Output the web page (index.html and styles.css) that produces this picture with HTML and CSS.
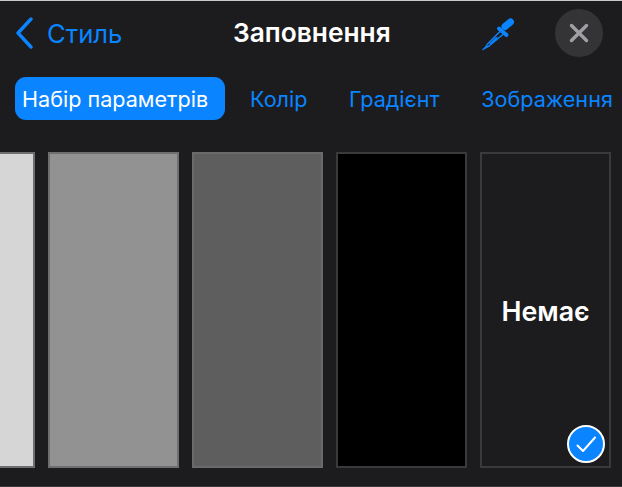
FILE: index.html
```html
<!DOCTYPE html>
<html lang="uk">
<head>
    <meta charset="UTF-8">
    <meta name="viewport" content="width=device-width, initial-scale=1.0">
    <title>Заповнення</title>
    <link rel="stylesheet" href="styles.css">
</head>
<body>
    <div class="panel">
        <!-- Top bar -->
        <div class="top-bar">
            <div class="back">
                <svg class="back-icon" width="18" height="32" viewBox="0 0 18 32"><path d="M16 2 L3 16 L16 30" fill="none" stroke="#0a84ff" stroke-width="3.4" stroke-linecap="round" stroke-linejoin="round"/></svg>
                <span>Стиль</span>
            </div>
            <div class="title">Заповнення</div>
            <svg class="dropper" width="34" height="34" viewBox="0 0 34 34">
                <path d="M24 9.500 L29.500 5" stroke="#0a84ff" stroke-width="7" stroke-linecap="round"/>
                <path d="M18 11.500 L25.500 18" stroke="#0a84ff" stroke-width="4" stroke-linecap="round"/>
                <path d="M19 14.500 L6.500 27 L4 31 L8 29 L22.500 17" fill="none" stroke="#0a84ff" stroke-width="1.400" stroke-linejoin="round"/>
                <path d="M8 27 L15 20 L17 20.500 L10 27.500 Z" fill="#0a84ff"/>
                <path d="M2 32.500 L4.500 30.500" stroke="#0a84ff" stroke-width="1.600" stroke-linecap="round"/>
            </svg>
            <div class="close">
                <svg width="20" height="20" viewBox="0 0 20 20"><path d="M2.500 2.500 L17.500 17.500 M17.500 2.500 L2.500 17.500" stroke="#a0a0a4" stroke-width="3.400" stroke-linecap="round"/></svg>
            </div>
        </div>

        <!-- Tabs -->
        <div class="tabs">
            <div class="tab active">Набір параметрів</div>
            <div class="tab">Колір</div>
            <div class="tab">Градієнт</div>
            <div class="tab">Зображення</div>
        </div>

        <!-- Swatches -->
        <div class="swatches">
            <div class="swatch light"></div>
            <div class="swatch mid"></div>
            <div class="swatch dark"></div>
            <div class="swatch black"></div>
            <div class="swatch none">
                <span class="none-label">Немає</span>
                <div class="check">
                    <svg width="24" height="20" viewBox="0 0 24 20"><path d="M3.500 11.500 L9 17 L21 3.500" fill="none" stroke="#fff" stroke-width="2" stroke-linecap="round" stroke-linejoin="round"/></svg>
                </div>
            </div>
        </div>
    </div>
</body>
</html>
```

FILE: styles.css
```css
* {
    box-sizing: border-box;
}

html, body {
    height: 100%;
}

body {
    margin: 0;
    padding: 0;
    overflow: hidden;
    background-color: #1c1c1e;
    font-family: 'Inter', 'Liberation Sans', sans-serif;
}

.panel {
    height: 487px;
    display: flex;
    flex-direction: column;
    border-top: 1px solid #c8c8c8;
    border-bottom: 1px solid #3a3a3c;
}

/* Top bar */
.top-bar {
    position: relative;
    height: 63px;
    padding: 1px 19px 0 15px;
    display: flex;
    align-items: center;
}

.back {
    display: flex;
    align-items: center;
    gap: 14px;
    color: #0a84ff;
    font-size: 25.7px;
}

.title {
    position: absolute;
    top: 16px;
    left: 233px;
    color: #fff;
    font-size: 26.3px;
    font-weight: 600;
}

.dropper {
    margin-left: auto;
    margin-right: 40px;
    margin-top: 2px;
}

.close {
    width: 48px;
    height: 48px;
    border-radius: 50%;
    background-color: #343437;
    display: flex;
    align-items: center;
    justify-content: center;
}

/* Tabs */
.tabs {
    margin-top: 13px;
    padding-left: 15px;
    display: flex;
    align-items: center;
    font-size: 21.6px;
    color: #0a84ff;
    gap: 41.5px;
}

.tab {
    white-space: nowrap;
}

.tab.active {
    width: 210px;
    height: 43px;
    margin-right: -16.5px;
    padding-left: 7px;
    background-color: #0a84ff;
    border-radius: 11px;
    color: #fff;
    display: flex;
    align-items: center;
}

/* Swatches */
.swatches {
    margin-top: 32px;
    margin-left: -96px;
    display: flex;
    gap: 13px;
}

.swatch {
    width: 131px;
    height: 316px;
    border: 2px solid #6e6e6e;
    flex-shrink: 0;
}

.swatch.light {
    background-color: #d6d6d6;
}

.swatch.mid {
    background-color: #929292;
}

.swatch.dark {
    background-color: #5e5e5e;
    border-color: #6a6a6a;
}

.swatch.black {
    background-color: #000;
    border-color: #3a3a3c;
}

.swatch.none {
    position: relative;
    border-color: #3a3a3c;
    color: #fff;
    font-size: 26.8px;
    font-weight: 600;
    display: flex;
    align-items: center;
    justify-content: center;
}

.none-label {
    padding-top: 2px;
}

.check {
    position: absolute;
    right: 4px;
    bottom: 3px;
    width: 38px;
    height: 38px;
    border-radius: 50%;
    background-color: #0a84ff;
    border: 2px solid #fff;
    display: flex;
    align-items: center;
    justify-content: center;
}
```
